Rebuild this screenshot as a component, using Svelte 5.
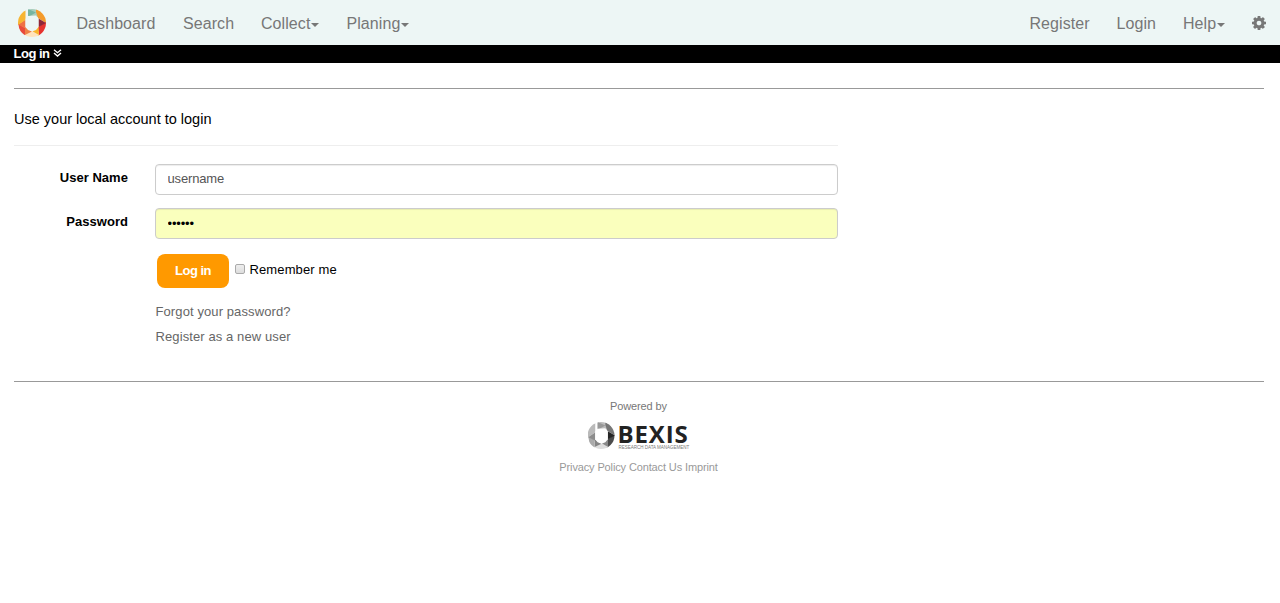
<script>
  const left = [
    { label: 'Dashboard', width: 106.5 },
    { label: 'Search', width: 78 },
    { label: 'Collect', width: 85.5, caret: true },
    { label: 'Planing', width: 70, caret: true }
  ];
  const right = [
    { label: 'Register', width: 87 },
    { label: 'Login', width: 66.5 },
    { label: 'Help', width: 69, caret: true }
  ];
  const colour = ['#a8cdbc', '#76b5a2', '#f49b2b', '#e6332f', '#8e2638', '#f8b62d', '#ffe3bd', '#f08045', '#e84a3c', '#ef7045', '#f7b532'];
  const grey = ['#bdbdbd', '#999999', '#777777', '#4c4c4c', '#252525', '#898989', '#dddddd', '#858585', '#aaaaaa', '#8c8c8c', '#bababa'];
  const facets = [
    '10,0 18,0 24,5 20,8 10,7',
    '10,0 18,3.5 10,8',
    '18,0 28,2 28,14 20,9 18,3',
    '28,13 28,22 21,28 20,18',
    '20.5,9.5 28,14 20.5,18',
    '20.500,17 21,28 14,22',
    '7,26 14,22 21,26 19,28 9,28',
    '7,18 14,22.500 7,26',
    '0,14 7,19 7,28 2,24',
    '0,15.500 7.500,10.500 7.500,19.500',
    '7.500,1 7.500,11 0,16 0,5'
  ];
  let remember = $state(false);
</script>

{#snippet wheel(palette, ground)}
  <svg class="wheel" viewBox="0 0 28 28" aria-hidden="true">
    {#each facets as points, i}<polygon {points} fill={palette[i]} />{/each}
    <polygon points="7.500,10 10,7 18,6.500 20.500,10 20.500,18 18,21 14,22.500 10,21 7.500,18" fill={ground} />
  </svg>
{/snippet}

{#snippet item(entry)}
  <a href="#top" style="width:{entry.width}px">{entry.label}{#if entry.caret}<i></i>{/if}</a>
{/snippet}

<nav>
  <div class="brand">{@render wheel(colour, '#edf6f5')}</div>
  {#each left as entry}{@render item(entry)}{/each}
  <div class="grow"></div>
  {#each right as entry}{@render item(entry)}{/each}
  <svg class="gear" viewBox="0 0 1536 1536" aria-label="Settings">
    <path fill="#777" fill-rule="evenodd" d="M1024 768q0-106-75-181t-181-75-181 75-75 181 75 181 181 75 181-75 75-181zm512-109v222q0 12-8 23t-20 13l-185 28q-19 54-39 91 35 50 107 138 10 12 10 25t-9 23q-27 37-99 108t-94 71q-12 0-26-9l-138-108q-44 23-91 38-16 136-29 186-7 28-36 28H657q-14 0-24.500-8.500T621 1506l-28-184q-49-16-90-37l-141 107q-10 9-25 9-14 0-25-11-126-114-165-168-7-10-7-23 0-12 8-23 15-21 51-66.500t54-70.500q-27-50-41-99L29 913q-13-2-21-12.500T0 877V655q0-12 8-23t19-13l186-28q14-46 39-92-40-57-107-138-10-12-10-24 0-10 9-23 26-36 98.500-107.500T337 135q13 0 26 10l138 107q44-23 91-38 16-136 29-186 7-28 36-28h222q14 0 24.500 8.500T915 30l28 184q49 16 90 37l142-107q9-9 24-9 13 0 25 10 129 119 165 170 7 8 7 22 0 12-8 23-15 21-51 66.500t-54 70.500q26 50 41 98l183 28q13 2 21 12.500t8 23.500z" />
  </svg>
</nav>
<div class="crumb">
  <span>Log in</span>
  <svg viewBox="0 0 9 8" aria-hidden="true"><path d="M1 .7 4.500 3.700 8 .7M1 4 4.500 7 8 4" fill="none" stroke="#fff" stroke-width="1.400" /></svg>
</div>

<main>
  <h4>Use your local account to login</h4>
  <form onsubmit={(e) => e.preventDefault()}>
    <div class="row"><label for="user">User Name</label><input id="user" type="text" value="username" /></div>
    <div class="row"><label for="pass">Password</label><input id="pass" type="password" value="secret" /></div>
    <div class="actions">
      <button>Log in</button>
      <label><input type="checkbox" bind:checked={remember} /><span>Remember me</span></label>
    </div>
    <a href="#forgot">Forgot your password?</a>
    <a href="#register">Register as a new user</a>
  </form>
</main>

<footer>
  <div class="powered">Powered by</div>
  <div class="bexis">
    {@render wheel(grey, '#fff')}
    <div class="word">
      <strong>BEXIS</strong>
      <small>RESEARCH DATA MANAGEMENT</small>
    </div>
  </div>
  <div class="links"><a href="#privacy">Privacy Policy</a> <a href="#contact">Contact Us</a> <a href="#imprint">Imprint</a></div>
</footer>

<style>
  :global(body) { background: #fff; font-family: "Liberation Sans", Arial, sans-serif; font-size: 13px; color: #000; }
  a { color: #666; text-decoration: none; }
  nav { height: 45px; background: #edf6f5; display: flex; align-items: flex-start; font-size: 16px; letter-spacing: .07px; }
  .brand { padding: 9px 0 0 18px; width: 58.500px; }
  .wheel { display: block; width: 28px; height: 28px; clip-path: circle(50%); }
  nav a { color: #777; line-height: 20px; padding-top: 14px; white-space: nowrap; }
  nav i { display: inline-block; border: 4px solid transparent; border-top-color: #777; border-bottom: 0; vertical-align: 2px; margin-left: 1px; }
  .grow { flex: 1; }
  .gear { width: 14px; height: 14px; margin: 16px 14px 0 0; }
  .crumb { display: flex; align-items: center; gap: 3px; height: 18px; background: #000; color: #fff; padding-left: 13.500px; font-size: 13px; line-height: 18px; font-weight: 700; letter-spacing: -.5px; }
  .crumb span { margin-top: -1px; }
  .crumb svg { width: 9px; height: 8px; margin-top: -2px; }
  main { margin: 25px 16px 0 14px; height: 292px; border-top: 1px solid #999; border-bottom: 1px solid #999; }
  h4 { margin: 0; width: 824px; height: 36px; padding-top: 20px; border-bottom: 1px solid #eee; font-size: 14.500px; font-weight: 400; line-height: 20px; }
  form { width: 824px; padding-top: 18px; }
  .row { display: flex; height: 31px; margin-bottom: 13px; }
  .row > label { width: 114px; margin-right: 27px; padding-top: 5px; line-height: 18px; text-align: right; font-weight: 700; letter-spacing: .04px; }
  .row input { flex: 1; box-sizing: border-box; height: 31px; border: 1px solid #ccc; border-radius: 4px; padding: 0 12px 2px 11.500px; font: 13px "Liberation Sans", Arial, sans-serif; letter-spacing: -.15px; color: #555; background: #fff; box-shadow: inset 0 1px 1px rgba(0,0,0,.075); outline: 0; }
  .row #pass { background: #faffbd; color: #000; padding-bottom: 1px; }
  .actions { display: flex; align-items: flex-start; margin: 15px 0 0 143px; height: 48px; }
  button { width: 72px; height: 34px; border: 0; border-radius: 8px; background: #ff9900; color: #fff; font: 700 13px "Liberation Sans", Arial, sans-serif; letter-spacing: -.5px; padding: 0 0 2px; }
  .actions label { display: flex; align-items: center; height: 30px; margin-left: 6px; letter-spacing: .12px; }
  .actions input { appearance: none; width: 10px; height: 10px; border: 1px solid #aaa; border-radius: 2px; background: linear-gradient(#eee, #ddd); margin: 0 4.500px 0 0; box-sizing: border-box; }
  form > a { display: block; line-height: 20px; height: 25px; margin-left: 141.500px; letter-spacing: .1px; }
  footer { width: 1277px; text-align: center; font-size: 11px; letter-spacing: -.13px; color: #777; }
  .powered { padding-top: 17px; height: 23px; line-height: 14px; }
  .bexis { display: flex; justify-content: center; height: 28px; gap: 3px; }
  .bexis :global(.wheel) { width: 27px; height: 27px; }
  .word { width: 72px; height: 28px; display: flex; flex-direction: column; text-align: left; white-space: nowrap; }
  .word strong { height: 23px; font: 700 24px/23px "Open Sans", sans-serif; letter-spacing: .9px; color: #222; }
  .word small { font-size: 4.500px; line-height: 5px; letter-spacing: 0; padding-left: 1px; }
  .links { margin-top: 10px; line-height: 14px; }
  .links a { color: #999; }
</style>
